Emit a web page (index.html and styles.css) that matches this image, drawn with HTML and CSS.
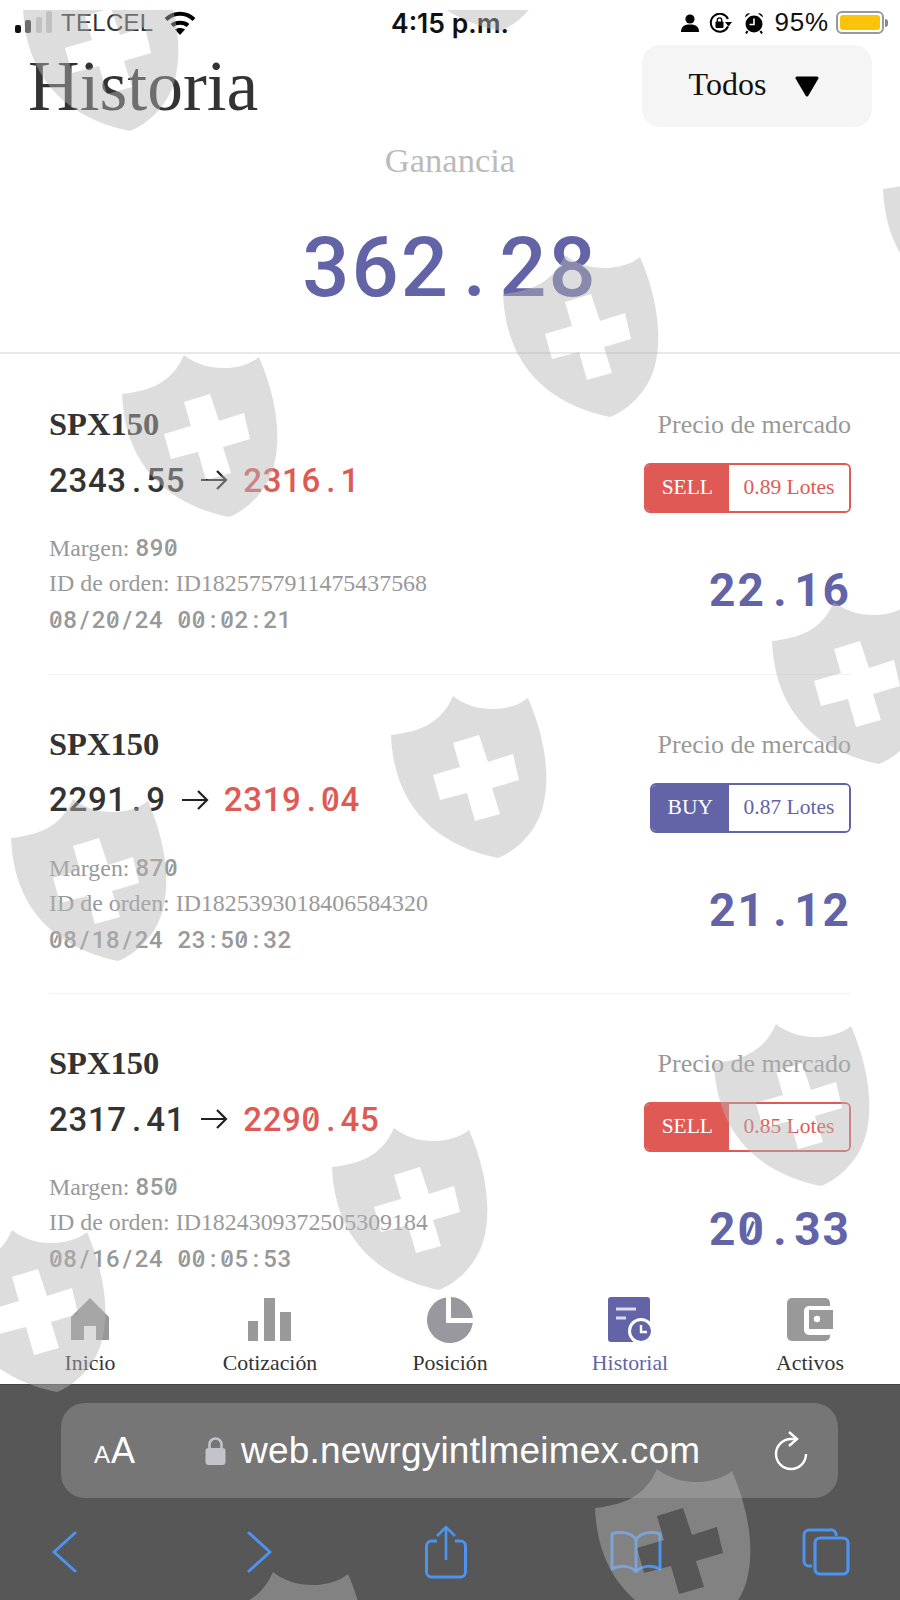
FILE: index.html
```html
<!DOCTYPE html>
<html>
  <head>
    <meta charset="UTF-8" />
    <title>Historia</title>
    <link rel="stylesheet" href="styles.css">
  </head>
  <body>
    <div class="status">
      <div class="status-left">
        <svg class="signal" width="38" height="24" viewBox="0 0 38 24">
          <rect x="0" y="14" width="6" height="8" rx="2" fill="#111"/>
          <rect x="10" y="9" width="6" height="13" rx="2" fill="#333"/>
          <rect x="21" y="6" width="6" height="16" rx="2" fill="#ccc"/>
          <rect x="31" y="0" width="6" height="22" rx="2" fill="#ccc"/>
        </svg>
        <span class="carrier">TELCEL</span>
        <svg class="wifi" width="32" height="24" viewBox="0 0 32 24">
          <path d="M2 8.5C10 .8 22 .8 30 8.5" fill="none" stroke="#000" stroke-width="4"/>
          <path d="M8 14.5C12 10.8 20 10.8 24 14.5" fill="none" stroke="#000" stroke-width="4"/>
          <path d="M11 18.5C14 16.5 18 16.5 21 18.5L16 24Z" fill="#000"/>
        </svg>
      </div>
      <div class="clock">4:15 p.m.</div>
      <div class="status-right">
        <svg width="18" height="18" viewBox="0 0 18 18">
          <circle cx="9" cy="5" r="4.6" fill="#000"/>
          <path d="M0 18C0 12 4 10.5 9 10.5S18 12 18 18Z" fill="#000"/>
        </svg>
        <svg class="rot" width="23" height="20" viewBox="0 0 23 20">
          <path d="M19 13.5A9 9 0 1 1 19 6" fill="none" stroke="#000" stroke-width="2"/>
          <path d="M16 9H23L19.500 13.500Z" fill="#000"/>
          <rect x="6.500" y="8.500" width="8" height="6.500" rx="1" fill="#000"/>
          <path d="M8.300 9V7a2.200 2.200 0 0 1 4.400 0V9" fill="none" stroke="#000" stroke-width="1.300"/>
        </svg>
        <svg class="alarm" width="20" height="22" viewBox="0 0 20 22">
          <circle cx="10" cy="12" r="8.500" fill="#000"/>
          <path d="M1 5.500A4 4 0 0 1 6 1.500ZM19 5.500A4 4 0 0 0 14 1.500Z" fill="#000"/>
          <path d="M3.500 19L2 21.500M16.500 19L18 21.500" stroke="#000" stroke-width="2"/>
          <path d="M10 6.500V12.500H5.500" fill="none" stroke="#fff" stroke-width="1.600"/>
        </svg>
        <span class="batt-num">95%</span>
        <div class="batt"><div class="batt-fill"></div></div>
        <div class="batt-nub"></div>
      </div>
    </div>

    <div class="head">
      <h1 class="title">Historia</h1>
      <div class="filter">
        <span>Todos</span>
        <svg width="24" height="21" viewBox="0 0 24 21"><path d="M2 2H22L12 19Z" fill="#000" stroke="#000" stroke-width="3" stroke-linejoin="round"/></svg>
      </div>
    </div>

    <div class="summary">
      <div class="sum-label">Ganancia</div>
      <div class="sum-num mono">362<span class="p">.</span>28</div>
    </div>

    <div class="list">
      <div class="row">
        <div class="left">
          <div class="sym">SPX150</div>
          <div class="price">
            <span class="mono">2343<span class="p">.</span>55</span>
            <svg class="arrow" width="28" height="22" viewBox="0 0 28 22"><path d="M1 11H26M17 2L26 11L17 20" fill="none" stroke="#222" stroke-width="2.200"/></svg>
            <span class="mono red">2316<span class="p">.</span>1</span>
          </div>
          <div class="meta">Margen: <span class="mono num">89<span class="z">0</span></span></div>
          <div class="meta">ID de orden: ID1825757911475437568</div>
          <div class="meta date mono"><span class="z">0</span>8<span class="p">/</span>2<span class="z">0</span><span class="p">/</span>24<span class="p"> </span><span class="z">0</span><span class="z">0</span><span class="p">:</span><span class="z">0</span>2<span class="p">:</span>21</div>
        </div>
        <div class="right">
          <div class="kind">Precio de mercado</div>
          <div class="pill sell"><span class="side">SELL</span><span class="lots">0.89 Lotes</span></div>
          <div class="gain mono">22<span class="p">.</span>16</div>
        </div>
      </div>

      <div class="row">
        <div class="left">
          <div class="sym">SPX150</div>
          <div class="price">
            <span class="mono">2291<span class="p">.</span>9</span>
            <svg class="arrow" width="28" height="22" viewBox="0 0 28 22"><path d="M1 11H26M17 2L26 11L17 20" fill="none" stroke="#222" stroke-width="2.200"/></svg>
            <span class="mono red">2319<span class="p">.</span><span class="z">0</span>4</span>
          </div>
          <div class="meta">Margen: <span class="mono num">87<span class="z">0</span></span></div>
          <div class="meta">ID de orden: ID1825393018406584320</div>
          <div class="meta date mono"><span class="z">0</span>8<span class="p">/</span>18<span class="p">/</span>24<span class="p"> </span>23<span class="p">:</span>5<span class="z">0</span><span class="p">:</span>32</div>
        </div>
        <div class="right">
          <div class="kind">Precio de mercado</div>
          <div class="pill buy"><span class="side">BUY</span><span class="lots">0.87 Lotes</span></div>
          <div class="gain mono">21<span class="p">.</span>12</div>
        </div>
      </div>

      <div class="row">
        <div class="left">
          <div class="sym">SPX150</div>
          <div class="price">
            <span class="mono">2317<span class="p">.</span>41</span>
            <svg class="arrow" width="28" height="22" viewBox="0 0 28 22"><path d="M1 11H26M17 2L26 11L17 20" fill="none" stroke="#222" stroke-width="2.200"/></svg>
            <span class="mono red">229<span class="z">0</span><span class="p">.</span>45</span>
          </div>
          <div class="meta">Margen: <span class="mono num">85<span class="z">0</span></span></div>
          <div class="meta">ID de orden: ID1824309372505309184</div>
          <div class="meta date mono"><span class="z">0</span>8<span class="p">/</span>16<span class="p">/</span>24<span class="p"> </span><span class="z">0</span><span class="z">0</span><span class="p">:</span><span class="z">0</span>5<span class="p">:</span>53</div>
        </div>
        <div class="right">
          <div class="kind">Precio de mercado</div>
          <div class="pill sell"><span class="side">SELL</span><span class="lots">0.85 Lotes</span></div>
          <div class="gain mono">2<span class="z">0</span><span class="p">.</span>33</div>
        </div>
      </div>
    </div>

    <div class="tabs">
      <div class="tab">
        <svg width="38" height="46" viewBox="0 0 38 46"><path d="M19 1L38 20V43H25V29H13V43H0V20Z" fill="#999"/></svg>
        <span>Inicio</span>
      </div>
      <div class="tab">
        <svg width="44" height="46" viewBox="0 0 44 46"><path d="M0 24H10V44H0ZM16 1H27V44H16ZM32 15H43V44H32Z" fill="#999"/></svg>
        <span>Cotización</span>
      </div>
      <div class="tab">
        <svg width="46" height="46" viewBox="0 0 46 46"><path d="M19 .4V26H45.800A23 23 0 1 1 19 .4Z" fill="#98989e"/><path d="M24 0V21H45.900A23 23 0 0 0 24 0Z" fill="#98989e"/></svg>
        <span>Posición</span>
      </div>
      <div class="tab on">
        <svg class="hist-ico" width="48" height="46" viewBox="0 0 48 46">
          <rect x="0" y="0" width="42" height="45" rx="3" fill="#6264a7"/>
          <path d="M8 12H28M8 21H18" stroke="#dcdcee" stroke-width="3"/>
          <circle cx="33" cy="34" r="13" fill="#fff"/>
          <circle cx="33" cy="34" r="10" fill="#6264a7"/>
          <path d="M33 28V35H39" fill="none" stroke="#fff" stroke-width="2.400"/>
        </svg>
        <span>Historial</span>
      </div>
      <div class="tab">
        <svg width="46" height="46" viewBox="0 0 46 46">
          <rect x="0" y="1" width="43" height="43" rx="5" fill="#999"/>
          <rect x="17" y="9" width="29" height="29" rx="5" fill="#fff"/>
          <rect x="22" y="13" width="24" height="19" fill="#999"/>
          <circle cx="30" cy="22" r="3.200" fill="#fff"/>
        </svg>
        <span>Activos</span>
      </div>
    </div>

    <div class="browser">
      <div class="url">
        <div class="aa"><span class="a-small">A</span><span class="a-big">A</span></div>
        <div class="addr">
          <svg width="21" height="28" viewBox="0 0 21 28"><path d="M4.500 12V7.500a6 6 0 0 1 12 0V12" fill="none" stroke="#c3c3cb" stroke-width="2.600"/><rect x="0.500" y="11" width="20" height="17" rx="3" fill="#c3c3cb"/></svg>
          <span>web.newrgyintlmeimex.com</span>
        </div>
        <svg class="reload" width="34" height="40" viewBox="0 0 34 40">
          <path d="M23 8H17A15 15 0 1 0 32 23" fill="none" stroke="#fff" stroke-width="2.400"/>
          <path d="M15 1L23 8L15 15" fill="none" stroke="#fff" stroke-width="2.400"/>
        </svg>
      </div>
      <div class="tools">
        <svg width="26" height="42" viewBox="0 0 26 42"><path d="M24 2L3 21L24 40" fill="none" stroke="#4d94f0" stroke-width="3" stroke-linecap="round" stroke-linejoin="round"/></svg>
        <svg class="t2" width="26" height="42" viewBox="0 0 26 42"><path d="M2 2L23 21L2 40" fill="none" stroke="#4d94f0" stroke-width="3" stroke-linecap="round" stroke-linejoin="round"/></svg>
        <svg class="t3" width="42" height="54" viewBox="0 0 42 54"><path d="M12 16H6A5 5 0 0 0 1.500 21V47A5 5 0 0 0 6 52H36A5 5 0 0 0 40.500 47V21A5 5 0 0 0 36 16H30" fill="none" stroke="#4d94f0" stroke-width="3"/><path d="M21 35V2M12 11L21 2L30 11" fill="none" stroke="#4d94f0" stroke-width="2.600"/></svg>
        <svg class="t4" width="52" height="42" viewBox="0 0 52 42"><path d="M26 9C22 1 9 0 2 3V38C9 34 21 34 26 41C31 34 43 34 50 38V3C43 0 30 1 26 9V41" fill="none" stroke="#4d94f0" stroke-width="3" stroke-linejoin="round"/></svg>
        <svg class="t5" width="48" height="48" viewBox="0 0 48 48"><path d="M10 38H7A5 5 0 0 1 2 33V7A5 5 0 0 1 7 2H28A5 5 0 0 1 34 8" fill="none" stroke="#4d94f0" stroke-width="3"/><rect x="13" y="10" width="33" height="36" rx="5" fill="none" stroke="#4d94f0" stroke-width="3.200"/></svg>
      </div>
    </div>

    <div class="marks">
      <svg width="0" height="0" class="defs"><defs>
        <path id="shield" fill-rule="evenodd" d="M11 55C36 52 60 46 73 16C92 32 128 34 148 18C166 60 171 100 162 130C155 152 138 170 118 178C60 166 14 130 11 55ZM73 63L99 55L108 82L133 74L139 100L112 108L120 134L95 141L87 113L60 120L53 95L80 87Z"/>
      </defs></svg>
      <svg class="shield s1" viewBox="0 0 180 190"><use href="#shield"/></svg>
      <svg class="shield s2" viewBox="0 0 180 190"><use href="#shield"/></svg>
      <svg class="shield s3" viewBox="0 0 180 190"><use href="#shield"/></svg>
      <svg class="shield s4" viewBox="0 0 180 190"><use href="#shield"/></svg>
      <svg class="shield s5" viewBox="0 0 180 190"><use href="#shield"/></svg>
      <svg class="shield s6" viewBox="0 0 180 190"><use href="#shield"/></svg>
      <svg class="shield s7" viewBox="0 0 180 190"><use href="#shield"/></svg>
      <svg class="shield s8" viewBox="0 0 180 190"><use href="#shield"/></svg>
      <svg class="shield s9" viewBox="0 0 180 190"><use href="#shield"/></svg>
      <svg class="shield s10" viewBox="0 0 180 190"><use href="#shield"/></svg>
      <svg class="shield s11" viewBox="0 0 180 190"><use href="#shield"/></svg>
      <svg class="shield s12" viewBox="0 0 180 190"><use href="#shield"/></svg>
      <svg class="shield s13" viewBox="0 0 180 190"><use href="#shield"/></svg>
    </div>
  </body>
</html>
```

FILE: styles.css
```css
*{margin: 0;padding: 0;box-sizing: border-box}
html,body{
  width: 900px;
  height: 1600px;
  overflow: hidden;
}
body{
  position: relative;
  display: flex;
  flex-direction: column;
  background: #fff;
  font-family: "Liberation Serif", serif;
  color: #333;
}

/* numbers look monospaced in the app */
.mono{
  font-family: Roboto, sans-serif;
  font-weight: 500;
  letter-spacing: var(--ls);
}
.p{
  display: inline-block;
  width: calc(1ch + var(--ls));
  text-align: center;
  letter-spacing: 0;
  white-space: pre;
}
/* slashed zero, roboto has none */
.z{
  position: relative;
  display: inline-block;
}
.z::after{
  content: "";
  position: absolute;
  left: .25em;
  top: 50%;
  width: .07em;
  height: .34em;
  margin-top: -.18em;
  background: currentColor;
  transform: rotate(22deg);
}

/* status bar */
.status{
  height: 45px;
  flex: none;
  display: grid;
  grid-template-columns: 1fr auto 1fr;
  align-items: center;
  font-family: "Liberation Sans", sans-serif;
  font-size: 25px;
  color: #111;
}
.status-left{
  display: flex;
  align-items: center;
  padding-left: 15px;
}
.signal{margin-top: 1px}
.carrier{
  margin-left: 8px;
  font-size: 24px;
  letter-spacing: .3px;
  color: #333;
}
.wifi{margin-left: 10px}
.clock{
  font-family: Inter, sans-serif;
  font-weight: 600;
  font-size: 26.5px;
}
.status-right{
  display: flex;
  align-items: center;
  justify-content: flex-end;
  padding-right: 12px;
}
.rot{margin-left: 10px}
.alarm{margin-left: 12px}
.batt-num{
  margin-left: 11px;
  font-size: 26px;
  letter-spacing: .8px;
}
.batt{
  width: 48px;
  height: 23px;
  margin-left: 7px;
  padding: 2px;
  border: 2px solid #999;
  border-radius: 6px;
}
.batt-fill{
  height: 100%;
  background: #fcc30b;
  border-radius: 3px;
}
.batt-nub{
  width: 3px;
  height: 8px;
  margin-left: 1px;
  background: #888;
  border-radius: 0 3px 3px 0;
}

/* header */
.head{
  height: 82px;
  flex: none;
  display: flex;
  justify-content: space-between;
  align-items: center;
  padding: 0 28px;
}
.title{
  font-size: 71.5px;
  font-weight: normal;
  line-height: 82px;
  color: #333;
}
.filter{
  width: 230px;
  height: 82px;
  display: flex;
  justify-content: center;
  align-items: center;
  gap: 29px;
  padding-right: 6px;
  background: #f5f5f5;
  border-radius: 18px;
  font-size: 32px;
  color: #111;
}
.filter span{margin-top: -3px}

.summary{
  height: 227px;
  flex: none;
  border-bottom: 2px solid #e8e8e8;
  text-align: center;
}
.sum-label{
  padding-top: 13px;
  font-size: 34.5px;
  line-height: 40px;
  color: #bbb;
}
.sum-num{
  --ls: 2.1px;
  margin-top: 38px;
  font-size: 83px;
  line-height: 100px;
  color: #6264a7;
}

/* order rows */
.list{
  flex: 1;
  min-height: 0;
  overflow: hidden;
  padding: 1px 49px 0;
}
.row{
  height: 319.5px;
  display: flex;
  justify-content: space-between;
  padding-top: 49px;
  border-bottom: 1px solid #f2f2f2;
}
.sym{
  font-size: 32.5px;
  font-weight: bold;
  line-height: 40px;
  color: #333;
}
.price{
  --ls: .7px;
  display: flex;
  align-items: center;
  gap: 15px;
  margin-top: 14px;
  height: 44px;
  font-size: 33px;
  color: #333;
}
.red{color: #e05a55}
.left .meta:nth-child(3){margin-top: 29px}
.meta{
  font-size: 23.9px;
  line-height: 35px;
  color: #999;
  white-space: nowrap;
}
.num{--ls: .7px}
.date{
  --ls: .7px;
  line-height: 38px;
}
.right{
  display: flex;
  flex-direction: column;
  align-items: flex-end;
}
.kind{
  margin-top: 3px;
  font-size: 26px;
  line-height: 36px;
  color: #999;
}
.pill{
  display: flex;
  height: 50px;
  margin-top: 20px;
  border: 2px solid;
  border-radius: 6px;
  overflow: hidden;
  font-size: 21.5px;
  line-height: 44px;
}
.side{
  padding: 0 16px;
  color: #fff;
}
.lots{
  width: 120px;
  text-align: center;
  background: #fff;
}
.sell{border-color: #e05a55}
.sell .side{background: #e05a55}
.sell .lots{color: #e05a55}
.buy{border-color: #6264a7}
.buy .side{background: #6264a7}
.buy .lots{color: #6264a7}
.gain{
  --ls: 2px;
  margin-top: 49px;
  font-size: 46px;
  font-weight: 700;
  line-height: 56px;
  color: #6264a7;
}

/* tab bar */
.tabs{
  height: 99px;
  flex: none;
  display: grid;
  grid-template-columns: repeat(5, 1fr);
  padding-top: 12px;
  background: #fff;
}
.tab{
  display: flex;
  flex-direction: column;
  align-items: center;
  font-size: 21.8px;
  line-height: 30px;
  color: #333;
}
.tab svg{flex: none}
.tab span{margin-top: 5px}
.hist-ico{margin-left: 4px}
.tab.on{color: #6264a7}

/* safari bar */
.browser{
  height: 216px;
  flex: none;
  padding-top: 18px;
  background: #575757;
  border-top: 1px solid #444;
}
.url{
  width: 777px;
  height: 95px;
  margin-left: 61px;
  display: flex;
  align-items: center;
  padding: 0 30px 0 33px;
  background: #767676;
  border-radius: 24px;
  color: #fff;
}
.aa{
  width: 111px;
  font-family: "Liberation Sans", sans-serif;
  white-space: nowrap;
}
.a-small{font-size: 24px}
.a-big{
  margin-left: 1px;
  font-size: 36px;
}
.addr{
  flex: 1;
  display: flex;
  align-items: center;
  gap: 15px;
  font-family: "Liberation Sans", sans-serif;
  font-size: 37px;
  letter-spacing: .2px;
  white-space: nowrap;
}
.tools{
  display: flex;
  align-items: center;
  margin-top: 27px;
  padding-left: 51px;
}
.t2{margin-left: 170px}
.t3{margin-left: 152px}
.t4{margin-left: 143px}
.t5{margin-left: 140px}

/* watermark lying over the whole page */
.marks{
  position: absolute;
  left: 0;
  top: 0;
  width: 900px;
  height: 1600px;
  overflow: hidden;
  clip-path: inset(10px 0 0 0);
  pointer-events: none;
}
.defs{position: absolute}
.shield{
  position: absolute;
  width: 180px;
  height: 190px;
  fill: rgba(180,180,180,.46);
}
.s1{left: 12px;top: -47px}
.s2{left: 382px;top: -147px}
.s3{left: 872px;top: 134px}
.s4{left: 492px;top: 239px}
.s5{left: 111px;top: 339px}
.s6{left: 761px;top: 586px}
.s7{left: 380px;top: 680px}
.s8{left: 0;top: 783px}
.s9{left: 703px;top: 1008px}
.s10{left: 321px;top: 1112px}
.s11{left: -61px;top: 1214px}
.s12{left: 584px;top: 1453px}
.s13{left: 200px;top: 1556px}
```
